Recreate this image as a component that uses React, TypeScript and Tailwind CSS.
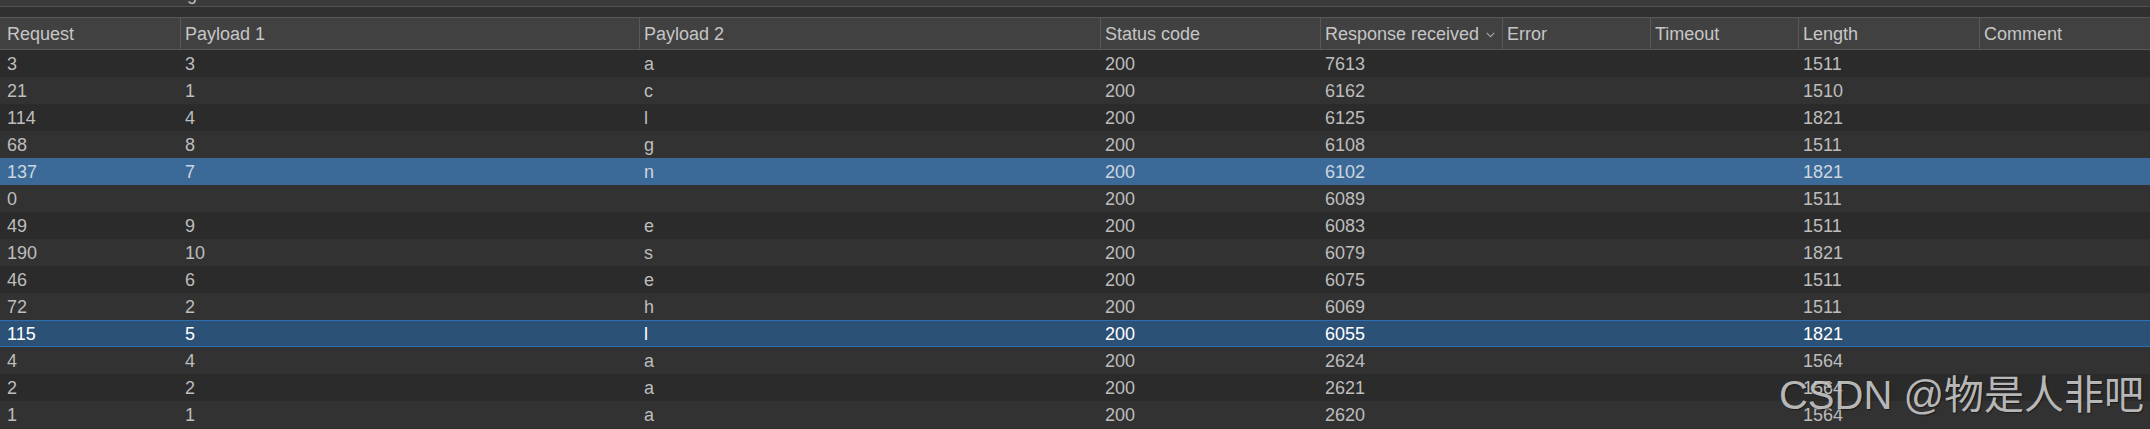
import React from "react";

const cols = "grid-cols-[180px_459px_461px_220px_182px_148px_148px_181px_171px]";

type Row = { r: string; p1: string; p2: string; s: string; rr: string; len: string; sel?: "a" | "b" };

const rows: Row[] = [
  { r: "3", p1: "3", p2: "a", s: "200", rr: "7613", len: "1511" },
  { r: "21", p1: "1", p2: "c", s: "200", rr: "6162", len: "1510" },
  { r: "114", p1: "4", p2: "l", s: "200", rr: "6125", len: "1821" },
  { r: "68", p1: "8", p2: "g", s: "200", rr: "6108", len: "1511" },
  { r: "137", p1: "7", p2: "n", s: "200", rr: "6102", len: "1821", sel: "a" },
  { r: "0", p1: "", p2: "", s: "200", rr: "6089", len: "1511" },
  { r: "49", p1: "9", p2: "e", s: "200", rr: "6083", len: "1511" },
  { r: "190", p1: "10", p2: "s", s: "200", rr: "6079", len: "1821" },
  { r: "46", p1: "6", p2: "e", s: "200", rr: "6075", len: "1511" },
  { r: "72", p1: "2", p2: "h", s: "200", rr: "6069", len: "1511" },
  { r: "115", p1: "5", p2: "l", s: "200", rr: "6055", len: "1821", sel: "b" },
  { r: "4", p1: "4", p2: "a", s: "200", rr: "2624", len: "1564" },
  { r: "2", p1: "2", p2: "a", s: "200", rr: "2621", len: "1564" },
  { r: "1", p1: "1", p2: "a", s: "200", rr: "2620", len: "1564" },
];

const headers = ["Request", "Payload 1", "Payload 2", "Status code", "Response received", "Error", "Timeout", "Length", "Comment"];

export default function App() {
  return (
    <div
      className="relative h-[429px] w-[2150px] overflow-hidden bg-[#2e2e2e] text-[18px] leading-none"
      style={{ fontFamily: '"Liberation Sans", Arial, "Noto Sans CJK SC", sans-serif' }}
    >
      {/* filter strip (mostly scrolled out of view) */}
      <div className="h-[6px] overflow-hidden bg-[#3b3b3b]">
        <div className="-mt-[15px] flex items-center gap-[60px] pl-[4px] text-[#bbbbbb]">
          <span className="h-[18px] w-[14px]" />
          <span>Filter: Showing all items</span>
        </div>
      </div>
      <div className="h-px bg-[#525252]" />
      <div className="h-[10px] bg-[#303030]" />

      {/* header */}
      <div className={`grid ${cols} h-[33px] border-y border-[#585858] bg-[#414141] text-[#c6c6c6]`}>
        {headers.map((h, i) => (
          <div
            key={h}
            className={`flex items-center ${i === 0 ? "pl-[7px]" : "border-l border-[#585858] pl-[4px]"}`}
          >
            <span>{h}</span>
            {h === "Response received" && (
              <svg className="ml-[7px] mt-[3px]" width="9" height="6" viewBox="0 0 9 6" fill="none">
                <path d="M0.8 0.8 L4.5 4.6 L8.2 0.8" stroke="#a8a8a8" strokeWidth="1.1" />
              </svg>
            )}
          </div>
        ))}
      </div>

      {/* rows */}
      <div className="flex flex-col">
        {rows.map((row, i) => {
          const base =
            row.sel === "a"
              ? "bg-[#3c6a98] text-[#cdd6df]"
              : row.sel === "b"
              ? "bg-[#2c5177] text-white border-y border-[#2f6db3]"
              : i % 2 === 0
              ? "bg-[#2b2b2b] text-[#bdbdbd]"
              : "bg-[#323232] text-[#bdbdbd]";
          const cells = [row.r, row.p1, row.p2, row.s, row.rr, "", "", row.len, ""];
          return (
            <div key={i} className={`grid ${cols} h-[27px] ${base}`}>
              {cells.map((c, j) => (
                <div key={j} className={`flex items-center ${j === 0 ? "pl-[7px]" : "pl-[5px]"}`}>
                  {c}
                </div>
              ))}
            </div>
          );
        })}
      </div>

      {/* watermark */}
      <div
        className="absolute bottom-[14px] right-[6px] text-[40px] leading-none text-[rgba(205,205,205,0.88)] [text-shadow:1px_1px_1px_rgba(0,0,0,0.45)]"
        style={{ fontFamily: '"Liberation Sans", "Noto Sans CJK SC", sans-serif' }}
      >
        CSDN @物是人非吧
      </div>
    </div>
  );
}
